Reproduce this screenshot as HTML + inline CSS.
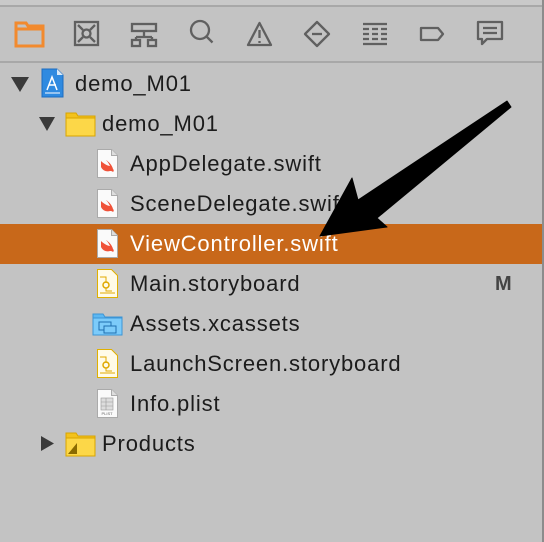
<!DOCTYPE html>
<html><head><style>
body{margin:0;width:544px;height:542px;background:#c3c3c3;position:relative;overflow:hidden;font-family:"Liberation Sans",sans-serif;}
.abs{position:absolute}
.t{position:absolute;font-size:22px;letter-spacing:0.85px;color:#1c1c1c;line-height:24px;white-space:nowrap}
</style></head><body>
<div class="abs" style="left:0;top:0;width:544px;height:5px;background:#c9c9c9"></div>
<div class="abs" style="left:0;top:5px;width:544px;height:2px;background:#a8a8a8"></div>
<div class="abs" style="left:0;top:61px;width:544px;height:2px;background:#a8a8a8"></div>
<div class="abs" style="left:542px;top:0;width:2px;height:542px;background:#8c8c8c"></div>

<svg class="abs" style="left:0;top:0" width="544" height="62" fill="none" stroke="#606060" stroke-width="2.3">
 <path d="M16 23h10l2 3h15v20H16z M16 29h27" stroke="#f28a2e" stroke-width="3"/>
 <rect x="75" y="22" width="23" height="23"/><circle cx="86.5" cy="33.5" r="4"/><path d="M78 25l5 5M95 25l-5 5M78 42l5-5M95 42l-5-5"/>
 <rect x="132" y="24" width="24" height="7"/><path d="M144 31v6M136 37h16M136 37v3M152 37v3"/><rect x="132" y="40" width="8" height="6"/><rect x="148" y="40" width="8" height="6"/>
 <circle cx="200" cy="30" r="9"/><path d="M206.5 36.5l6 6"/>
 <path d="M248 45h23l-11.5-22z" stroke-linejoin="round"/><path d="M259.5 30v8M259.5 41v2"/>
 <path d="M305 34l12-12 12 12-12 12z" stroke-linejoin="round"/><path d="M312 34h10"/>
 <path d="M363 24h24M363 44h24M363 29h6M372 29h6M381 29h6M363 34h6M372 34h6M381 34h6M363 39h6M372 39h6M381 39h6"/>
 <path d="M421 28h17l5 6-5 6h-17z" stroke-linejoin="round"/>
 <path d="M478 22h24v17h-15l-5 5v-5h-4z" stroke-linejoin="round"/><path d="M483 28h14M483 33h14"/>
</svg>

<div class="abs" style="left:0;top:224px;width:542px;height:40px;background:#c8681a"></div>

<svg class="abs" style="left:0;top:0" width="80" height="460">
 <path d="M11 77h18l-9 15z" fill="#3a3a3a"/>
 <path d="M39 117h16l-8 14z" fill="#3a3a3a"/>
 <path d="M41 436v15l13-7.5z" fill="#3a3a3a"/>
</svg>

<svg class="abs" style="left:41px;top:68px" width="23" height="30">
 <path d="M1 1h15l6 6v22H1z" fill="#2f8ae0" stroke="#1c6cc0"/>
 <path d="M16 1v6h6" fill="#d9e9f8"/>
 <path d="M6 22l5-13 5 13M8 17h7" stroke="#fff" stroke-width="1.5" fill="none"/>
 <path d="M4 25h15" stroke="#fff"/>
</svg>
<svg class="abs" style="left:65px;top:112px" width="31" height="25">
 <path d="M1 1h10l2 3h17v20H1z" fill="#f3c21c" stroke="#d9a400"/>
 <path d="M1 6h29v18H1z" fill="#fcd748" stroke="#d9a400"/>
</svg>
<svg class="abs" style="left:65px;top:432px" width="31" height="25">
 <path d="M1 1h10l2 3h17v20H1z" fill="#f3c21c" stroke="#d9a400"/>
 <path d="M1 6h29v18H1z" fill="#fcd748" stroke="#d9a400"/>
 <path d="M3 22l9-11v11z" fill="#8a6a00"/>
</svg>

<svg class="abs" style="left:96px;top:0" width="26" height="420">
 <defs>
  <g id="doc"><path d="M1.5 0.5h14l6 6v22h-20z" fill="#fafafa" stroke="#aaa"/><path d="M15.5 0.5v6h6" fill="#ddd" stroke="#aaa"/></g>
  <g id="sw"><use href="#doc"/><path d="M5 12c3 3 7 5 9 5-1-2-2-4-4-6 3 2 6 5 7 9 1 1 1 2 0 3-1-1-2-1-3-1-3 1-7 0-9-4z" fill="#f05138"/></g>
  <g id="sb"><path d="M1.5 0.5h14l6 6v22h-20z" fill="#fffbe8" stroke="#e0b000"/><path d="M4 8h6v6M4 24h15" stroke="#e0a800" fill="none"/><circle cx="10" cy="16" r="3" fill="none" stroke="#e0a800" stroke-width="1.5"/><path d="M10 19v3h6" stroke="#e0a800" fill="none"/></g>
 </defs>
 <use href="#sw" y="149"/>
 <use href="#sw" y="189"/>
 <use href="#sw" y="229"/>
 <use href="#sb" y="269"/>
 <use href="#sb" y="349"/>
 <use href="#doc" y="389"/>
 <g transform="translate(0,389)"><rect x="5" y="9" width="12" height="12" fill="#ddd" stroke="#999" stroke-width=".6"/><path d="M5 13h12M5 17h12M10 9v12" stroke="#999" stroke-width=".6"/><text x="11" y="26" font-size="4" text-anchor="middle" fill="#666" font-family="Liberation Sans">PLIST</text></g>
</svg>
<svg class="abs" style="left:92px;top:313px" width="32" height="24">
 <path d="M1 1h10l2 3h17v18H1z" fill="#5db8f2" stroke="#3b95d6"/>
 <path d="M1 5h29v17H1z" fill="#7ccbfa" stroke="#3b95d6"/>
 <rect x="7" y="9" width="12" height="8" fill="none" stroke="#1f6fb0"/><rect x="12" y="13" width="12" height="7" fill="#7ccbfa" stroke="#1f6fb0"/>
</svg>

<div class="t" style="left:75px;top:72px">demo_M01</div>
<div class="t" style="left:102px;top:112px">demo_M01</div>
<div class="t" style="left:130px;top:152px">AppDelegate.swift</div>
<div class="t" style="left:130px;top:192px">SceneDelegate.swift</div>
<div class="t" style="left:130px;top:232px;color:#fff">ViewController.swift</div>
<div class="t" style="left:130px;top:272px">Main.storyboard</div>
<div class="t" style="left:495px;top:272px;font-weight:bold;color:#444;font-size:20px;letter-spacing:0">M</div>
<div class="t" style="left:130px;top:312px">Assets.xcassets</div>
<div class="t" style="left:130px;top:352px">LaunchScreen.storyboard</div>
<div class="t" style="left:130px;top:392px">Info.plist</div>
<div class="t" style="left:102px;top:432px">Products</div>

<svg class="abs" style="left:0;top:0" width="544" height="300">
 <path d="M507 101 L511 107 L377 218 L387 227 L320 236 L352 178 L358 200 Z" fill="#000" stroke="#000" stroke-width="1" stroke-linejoin="round"/>
</svg>
</body></html>
